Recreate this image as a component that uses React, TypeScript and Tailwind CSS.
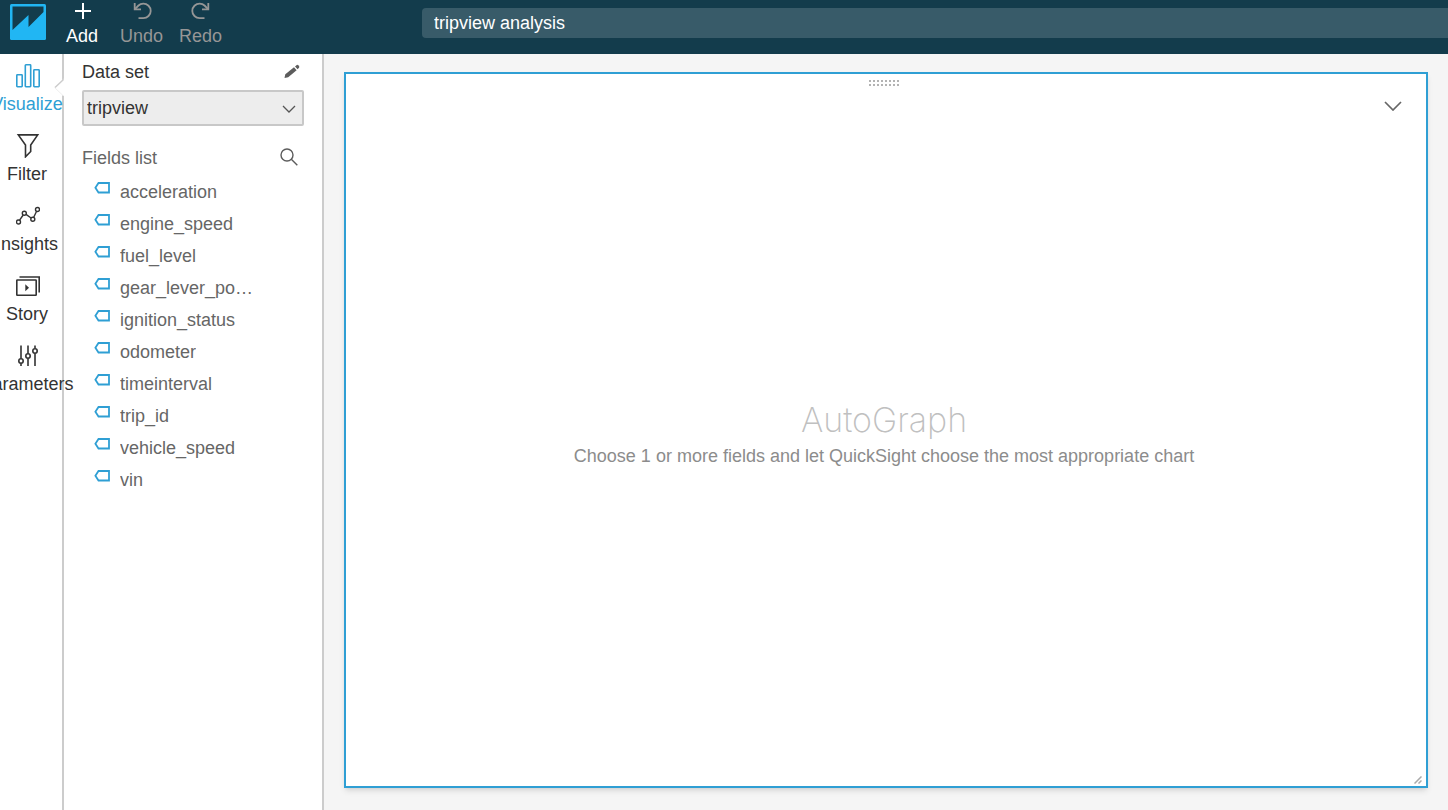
import type { ReactNode } from "react";

const fields = [
  "acceleration",
  "engine_speed",
  "fuel_level",
  "gear_lever_position",
  "ignition_status",
  "odometer",
  "timeinterval",
  "trip_id",
  "vehicle_speed",
  "vin",
];

function Logo() {
  return (
    <svg width="36" height="36" viewBox="0 0 36 36" aria-hidden="true">
      <rect width="36" height="36" rx="1.5" fill="#21b6f3" />
      <path d="M2.5 2.5H33.5V8L18.500 23V11L2.500 26Z" fill="#133c4c" />
    </svg>
  );
}

function UndoIcon({ flipped = false }: { flipped?: boolean }) {
  return (
    <svg
      width="20"
      height="20"
      viewBox="0 0 20 20"
      fill="none"
      stroke="currentColor"
      strokeWidth="1.8"
      className={flipped ? "-scale-x-100" : ""}
      aria-hidden="true"
    >
      <path d="M2.700 3V9.300H9" />
      <path d="M2.700 9.300L6.500 5.500C7.800 4.200 9.300 3.600 11.300 3.600C15.400 3.600 18.700 6.900 18.700 10.900C18.700 14.900 15.400 18.100 11.300 18.100H6.500" />
    </svg>
  );
}

const navItems: { label: string; icon: ReactNode }[] = [
  {
    label: "Visualize",
    icon: (
      <>
        <rect x="0.8" y="10.800" width="5.400" height="11.900" rx="0.6" />
        <rect x="9.300" y="0.800" width="5.400" height="21.900" rx="0.6" />
        <rect x="17.800" y="5.800" width="5.400" height="16.900" rx="0.6" />
      </>
    ),
  },
  {
    label: "Filter",
    icon: <path d="M2.300 0.900H21.700L14.700 11V17.500L9.500 22.800V11Z" />,
  },
  {
    label: "Insights",
    icon: (
      <g strokeWidth="1.400">
        <circle cx="2.500" cy="18" r="2" />
        <circle cx="8.300" cy="9.200" r="2" />
        <circle cx="16.800" cy="15.200" r="2" />
        <circle cx="21.500" cy="5.500" r="2" />
        <path d="M3.600 16.200L7.200 11M10 10.400L15.100 14M17.700 13.300L20.600 7.300" />
      </g>
    ),
  },
  {
    label: "Story",
    icon: (
      <>
        <rect x="0.800" y="6" width="19.400" height="15.200" rx="0.500" />
        <path d="M3.500 3H23.200V18.500" />
        <path d="M9.300 10.200V17.200L13 13.700Z" fill="currentColor" stroke="none" />
      </>
    ),
  },
  {
    label: "Parameters",
    icon: (
      <>
        <path d="M5 1.500V14.500M5 19.500V22M12 1.500V9.500M12 14.500V22M19 1.500V4.500M19 9.500V22" />
        <circle cx="5" cy="17" r="2.200" />
        <circle cx="12" cy="12" r="2.200" />
        <circle cx="19" cy="7" r="2.200" />
      </>
    ),
  },
];

function Header() {
  return (
    <header className="flex h-[54px] shrink-0 bg-[#133c4c] text-lg/6">
      <div className="flex w-[422px] shrink-0 items-start">
        <a href="#home" aria-label="Home" className="mt-1 ml-2.5 block">
          <Logo />
        </a>
        <div className="ml-5 flex gap-4">
          <button type="button" className="mr-1.5 flex flex-col items-center gap-1 text-white">
            <svg width="20" height="20" viewBox="0 0 20 20" stroke="currentColor" strokeWidth="2" aria-hidden="true">
              <path d="M11 3V19M3 11H19" />
            </svg>
            Add
          </button>
          <button type="button" className="flex flex-col items-center gap-1 text-[#969696]">
            <UndoIcon />
            Undo
          </button>
          <button type="button" className="flex flex-col items-center gap-1 text-[#969696]">
            <UndoIcon flipped />
            Redo
          </button>
        </div>
      </div>
      <input
        aria-label="Analysis name"
        defaultValue="tripview analysis"
        className="mt-2 h-[30px] min-w-0 flex-1 rounded-l-sm bg-[#385b69] px-3 text-white outline-none"
      />
    </header>
  );
}

function SideNav() {
  return (
    <nav className="relative z-10 w-16 shrink-0 border-r-2 border-[#cccccc]">
      <ul className="w-[54px]">
        {navItems.map(({ label, icon }, index) => (
          <li key={label}>
            <button
              type="button"
              aria-current={index === 0 ? "page" : undefined}
              className={
                index === 0
                  ? "flex h-[70px] w-full flex-col items-center gap-1 pt-2.5 text-[#2f9fd4]"
                  : "flex h-[70px] w-full flex-col items-center gap-1 pt-2.5 text-[#333333]"
              }
            >
              <svg
                width="24"
                height="24"
                viewBox="0 0 24 24"
                fill="none"
                stroke="currentColor"
                strokeWidth="1.600"
                className="ml-0.5 shrink-0"
                aria-hidden="true"
              >
                {icon}
              </svg>
              <span>{label}</span>
            </button>
          </li>
        ))}
      </ul>
      <svg
        width="12"
        height="18"
        viewBox="0 0 12 18"
        fill="none"
        className="absolute top-6 -right-0.5"
        aria-hidden="true"
      >
        <path d="M12 0V18L10 17L1.500 9L10 2Z" fill="#fff" />
        <path d="M11 0V2L3 9.500" stroke="#cccccc" strokeWidth="1.500" />
        <path d="M2.500 9.500L11 17.500" stroke="#eeeeee" />
      </svg>
    </nav>
  );
}

function DataPanel() {
  return (
    <aside className="w-[260px] shrink-0 border-r-2 border-[#cccccc] pt-1.5 pr-[18px] pl-[18px]">
      <div className="flex items-center justify-between pr-1">
        <label htmlFor="dataset" className="text-[#333333]">
          Data set
        </label>
        <button type="button" aria-label="Edit data set" className="text-[#5c5c5c]">
          <svg width="16" height="16" viewBox="0 0 16 16" fill="currentColor" aria-hidden="true">
            <path d="M0.500 14L1.300 10.300L10 3.200L12.600 6.200L4.200 13.200Z" />
            <path d="M11 2.400L12.800 1Q13.600 0.500 14.200 1.200L15.100 2.300Q15.600 3.100 15 3.800L13.600 5.300Z" />
          </svg>
        </button>
      </div>
      <div className="relative mt-1.5">
        <select
          id="dataset"
          defaultValue="tripview"
          className="h-9 w-full appearance-none rounded-xs border-2 border-[#c8c8c8] bg-[#ededed] pr-8 pl-[3px] text-[#333333]"
        >
          <option>tripview</option>
        </select>
        <svg
          width="14"
          height="8"
          viewBox="0 0 14 8"
          fill="none"
          stroke="#555555"
          strokeWidth="1.300"
          className="pointer-events-none absolute top-[15px] right-2"
          aria-hidden="true"
        >
          <path d="M1 1L7 7L13 1" />
        </svg>
      </div>
      <div className="mt-5 flex items-center justify-between pr-1.5">
        <h2 className="text-[#666666]">Fields list</h2>
        <button type="button" aria-label="Search fields" className="text-[#5c5c5c]">
          <svg
            width="18"
            height="20"
            viewBox="0 0 18 20"
            fill="none"
            stroke="currentColor"
            strokeWidth="1.400"
            aria-hidden="true"
          >
            <circle cx="7" cy="7" r="6" />
            <path d="M11.300 11.300L17.300 17.300" />
          </svg>
        </button>
      </div>
      <ul className="mt-1.5 ml-3 w-[166px] text-[#666666]">
        {fields.map((field) => (
          <li key={field} className="flex h-8 gap-2.5">
            <svg
              width="16"
              height="12"
              viewBox="0 0 16 12"
              fill="none"
              stroke="#2f9fd4"
              strokeWidth="1.800"
              className="mt-1.5 shrink-0"
              aria-hidden="true"
            >
              <path d="M4.500 1H15V10.500H4.500L1.400 5.750Z" />
            </svg>
            <span className="truncate leading-8">{field}</span>
          </li>
        ))}
      </ul>
    </aside>
  );
}

function Canvas() {
  return (
    <main className="flex min-w-0 flex-1 bg-[#f5f5f5] px-5 pt-[18px] pb-[22px]">
      <section className="relative flex flex-1 flex-col items-center justify-center border-2 border-[#2f9fd4] bg-white pt-1 pr-5 pl-4 text-center shadow-md">
        <svg width="30" height="6" viewBox="0 0 30 6" fill="#b3b3b3" className="absolute top-1.5" aria-hidden="true">
          {[0, 4, 8, 12, 16, 20, 24, 28].map((x) => (
            <g key={x}>
              <rect x={x} y="0" width="2" height="2" />
              <rect x={x} y="4" width="2" height="2" />
            </g>
          ))}
        </svg>
        <button type="button" aria-label="Expand visual menu" className="absolute top-[27px] right-6">
          <svg
            width="18"
            height="10"
            viewBox="0 0 18 10"
            fill="none"
            stroke="#666666"
            strokeWidth="1.700"
            aria-hidden="true"
          >
            <path d="M1 1L9 9L17 1" />
          </svg>
        </button>
        <h1 className="font-[Inter,sans-serif] text-[34px]/12 font-extralight text-[#c0c0c0]">AutoGraph</h1>
        <p className="text-[#8c8c8c]">Choose 1 or more fields and let QuickSight choose the most appropriate chart</p>
        <svg
          width="8"
          height="8"
          viewBox="0 0 8 8"
          stroke="#aaaaaa"
          strokeWidth="1.500"
          className="absolute right-1 bottom-0.5"
          aria-hidden="true"
        >
          <path d="M0.500 7.500L7.500 0.500M4.500 7.500L7.500 4.500" />
        </svg>
      </section>
    </main>
  );
}

export default function App() {
  return (
    <div className="flex min-h-screen flex-col overflow-x-hidden bg-white font-['Liberation_Sans',Arial,sans-serif] text-lg/6">
      <Header />
      <div className="flex flex-1">
        <SideNav />
        <DataPanel />
        <Canvas />
      </div>
    </div>
  );
}
